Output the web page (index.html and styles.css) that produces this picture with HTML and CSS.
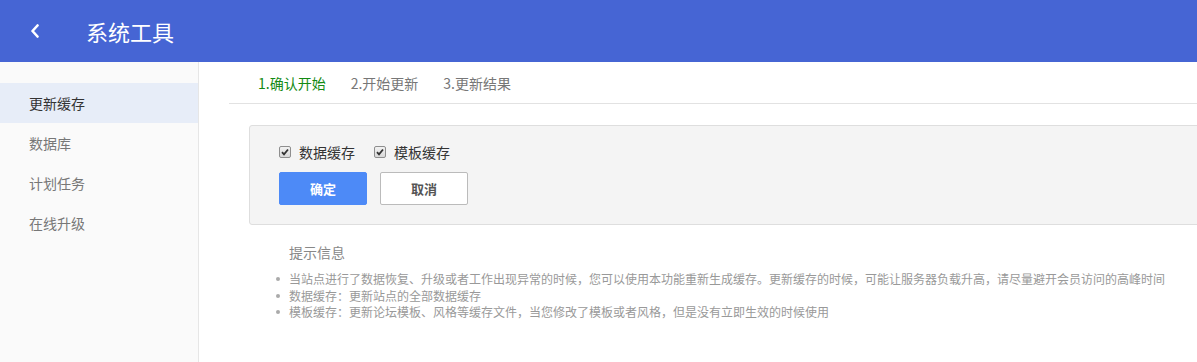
FILE: index.html
```html
<!DOCTYPE html>
<html lang="zh-CN">
<head>
    <meta charset="UTF-8">
    <meta name="viewport" content="width=device-width, initial-scale=1.0">
    <title>系统工具</title>
    <link rel="stylesheet" href="styles.css">
</head>
<body>
    <header class="topbar">
        <a class="back" href="#">
            <svg width="10" height="14" viewBox="0 0 10 14"><path d="M7.5 1.5 L2.5 7 L7.5 12.5" fill="none" stroke="#fff" stroke-width="2.6" stroke-linecap="round" stroke-linejoin="round"/></svg>
        </a>
        <h1>系统工具</h1>
    </header>

    <div class="layout">
        <aside class="sidebar">
            <a class="side-item active" href="#">更新缓存</a>
            <a class="side-item" href="#">数据库</a>
            <a class="side-item" href="#">计划任务</a>
            <a class="side-item" href="#">在线升级</a>
        </aside>

        <main class="main">
            <div class="steps">
                <span class="step current">1.确认开始</span>
                <span class="step">2.开始更新</span>
                <span class="step">3.更新结果</span>
            </div>

            <form class="panel">
                <div class="checks">
                    <label class="check"><span class="box"><svg width="8" height="8" viewBox="0 0 8 8"><path d="M1 4.2 L3 6.3 L7 1.5" fill="none" stroke="#333" stroke-width="1.8"/></svg></span>数据缓存</label>
                    <label class="check"><span class="box"><svg width="8" height="8" viewBox="0 0 8 8"><path d="M1 4.2 L3 6.3 L7 1.5" fill="none" stroke="#333" stroke-width="1.8"/></svg></span>模板缓存</label>
                </div>
                <div class="actions">
                    <button type="button" class="btn primary">确定</button>
                    <button type="button" class="btn">取消</button>
                </div>
            </form>

            <div class="tips">
                <h3>提示信息</h3>
                <ul>
                    <li>当站点进行了数据恢复、升级或者工作出现异常的时候，您可以使用本功能重新生成缓存。更新缓存的时候，可能让服务器负载升高，请尽量避开会员访问的高峰时间</li>
                    <li>数据缓存：更新站点的全部数据缓存</li>
                    <li>模板缓存：更新论坛模板、风格等缓存文件，当您修改了模板或者风格，但是没有立即生效的时候使用</li>
                </ul>
            </div>
        </main>
    </div>
</body>
</html>
```

FILE: styles.css
```css
html, body {
    margin: 0;
    overflow: hidden;
}

body {
    font-family: "Noto Sans CJK SC", "Liberation Sans", sans-serif;
    color: #333;
    background: #fff;
}

.topbar {
    height: 62px;
    background-color: #4665d4;
    display: flex;
    align-items: center;
}

.back {
    display: flex;
    width: 10px;
    margin-left: 30px;
}

.topbar h1 {
    margin: 0 0 0 46px;
    font-size: 22px;
    font-weight: normal;
    color: #fff;
    line-height: 1;
}

.layout {
    display: flex;
    min-height: calc(100vh - 62px);
}

.sidebar {
    width: 198px;
    flex-shrink: 0;
    background-color: #fafafa;
    border-right: 1px solid #e6e6e6;
    padding-top: 21px;
}

.side-item {
    display: block;
    height: 40px;
    line-height: 40px;
    padding-left: 29px;
    font-size: 14px;
    color: #777;
    text-decoration: none;
}

.side-item.active {
    background-color: #e7edf8;
    color: #333;
}

.main {
    flex: 1;
    min-width: 0;
}

.steps {
    margin-left: 30px;
    padding-left: 29px;
    height: 41px;
    border-bottom: 1px solid #e2e2e2;
    display: flex;
    align-items: center;
    gap: 25px;
    font-size: 14px;
    color: #777;
}

.step.current {
    color: #138a13;
}

.panel {
    margin: 21px -20px 0 50px;
    background-color: #f4f4f4;
    border: 1px solid #dedede;
    border-radius: 3px;
    padding: 16px 29px 19px;
}

.checks {
    display: flex;
    gap: 19px;
    height: 20px;
    align-items: center;
}

.check {
    display: flex;
    align-items: center;
    font-size: 14px;
    color: #333;
}

.box {
    width: 10px;
    height: 10px;
    border: 1px solid #8e8e8e;
    border-radius: 2px;
    background: linear-gradient(#f2f2f2, #d8d8d8);
    display: flex;
    align-items: center;
    justify-content: center;
    margin-right: 8px;
}

.actions {
    display: flex;
    gap: 13px;
    margin-top: 10px;
}

.btn {
    width: 88px;
    height: 33px;
    font-family: inherit;
    font-size: 13px;
    font-weight: bold;
    color: #555;
    background-color: #fff;
    border: 1px solid #bbb;
    border-radius: 2px;
    cursor: pointer;
}

.btn.primary {
    background-color: #4d8af7;
    border-color: #4d8af7;
    color: #fff;
}

.tips {
    padding-left: 90px;
}

.tips h3 {
    margin: 17px 0 0;
    font-size: 14px;
    font-weight: normal;
    line-height: 20px;
    color: #888;
}

.tips ul {
    margin: 9px 0 0;
    padding-left: 0;
    list-style: none;
    font-size: 12px;
    line-height: 16.5px;
    color: #999;
    white-space: nowrap;
}

.tips li {
    position: relative;
}

.tips li::before {
    content: "";
    position: absolute;
    left: -13px;
    top: 6px;
    width: 4px;
    height: 4px;
    border-radius: 50%;
    background-color: #aaa;
}
```
